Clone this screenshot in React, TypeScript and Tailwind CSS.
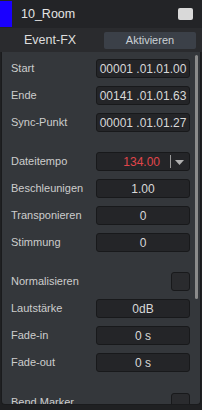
const Field = ({ children }: { children: React.ReactNode }) => (
  <div className="w-[94px] h-[19px] rounded-[3px] border border-[#18191b] bg-[#242528] flex items-center justify-center text-[12px] text-[#d8d8d8]">
    {children}
  </div>
);

const Row = ({ label, children }: { label: string; children: React.ReactNode }) => (
  <div className="flex items-center justify-between h-[19px] pl-[9px] pr-[10px]">
    <span className="text-[11px] text-[#cdcdcd]">{label}</span>
    {children}
  </div>
);

const Check = () => (
  <div className="w-[19px] h-[19px] rounded-[3px] border border-[#18191b] bg-[#2a2b2e]" />
);

export default function App() {
  return (
    <div
      className="w-[202px] h-[410px] bg-[#1f2022] overflow-hidden"
      style={{ fontFamily: '"Liberation Sans", Arial, sans-serif' }}
    >
      <div className="h-[28px] flex items-center bg-[#232427]">
        <div className="w-[12px] h-[26px] bg-[#1a00ff]" />
        <span className="ml-[9px] text-[12.5px] text-[#e4e4e4]">10_Room</span>
        <div className="ml-auto mr-[9px] w-[15px] h-[12px] rounded-[2px] bg-[#d9d9d9]" />
      </div>
      <div className="h-[24px] flex items-center bg-[#2a2b2e]">
        <span className="ml-[24px] text-[12.5px] text-[#dedede]">Event-FX</span>
        <div className="ml-auto mr-[6px] w-[92px] h-[17px] rounded-[2px] bg-[#3b4048] flex items-center justify-center text-[11px] text-[#cbd0d6]">
          Aktivieren
        </div>
      </div>
      <div className="relative ml-[1px] mr-[1px] h-[353px] rounded-b-[4px] border-x border-b border-[#1a1b1d] bg-[#34373b] overflow-hidden pt-[7px]">
        <div className="absolute right-[2px] top-[3px] w-[3px] h-[244px] rounded-[2px] bg-[#8b8b8b]" />
        <div className="flex flex-col gap-[8px]">
          <Row label="Start">
            <Field>00001 .01.01.00</Field>
          </Row>
          <Row label="Ende">
            <Field>00141 .01.01.63</Field>
          </Row>
          <Row label="Sync-Punkt">
            <Field>00001 .01.01.27</Field>
          </Row>
        </div>
        <div className="flex flex-col gap-[8px] mt-[20px]">
          <Row label="Dateitempo">
            <div className="w-[94px] h-[19px] rounded-[3px] border border-[#18191b] bg-[#242528] flex items-center text-[12px]">
              <span className="flex-1 text-right pr-[10px] text-[#e0454b]">134.00</span>
              <div className="w-[1px] h-[13px] bg-[#9a9a9a]" />
              <svg width="16" height="8" viewBox="0 0 16 8" className="mx-[1px]">
                <path d="M3 2 L12 2 L7.5 7 Z" fill="#b0b0b0" />
              </svg>
            </div>
          </Row>
          <Row label="Beschleunigen">
            <Field>1.00</Field>
          </Row>
          <Row label="Transponieren">
            <Field>0</Field>
          </Row>
          <Row label="Stimmung">
            <Field>0</Field>
          </Row>
        </div>
        <div className="flex flex-col gap-[8px] mt-[20px]">
          <Row label="Normalisieren">
            <Check />
          </Row>
          <Row label="Lautstärke">
            <Field>0dB</Field>
          </Row>
          <Row label="Fade-in">
            <Field>0 s</Field>
          </Row>
          <Row label="Fade-out">
            <Field>0 s</Field>
          </Row>
        </div>
        <div className="mt-[21px]">
          <Row label="Bend Marker">
            <Check />
          </Row>
        </div>
      </div>
    </div>
  );
}
